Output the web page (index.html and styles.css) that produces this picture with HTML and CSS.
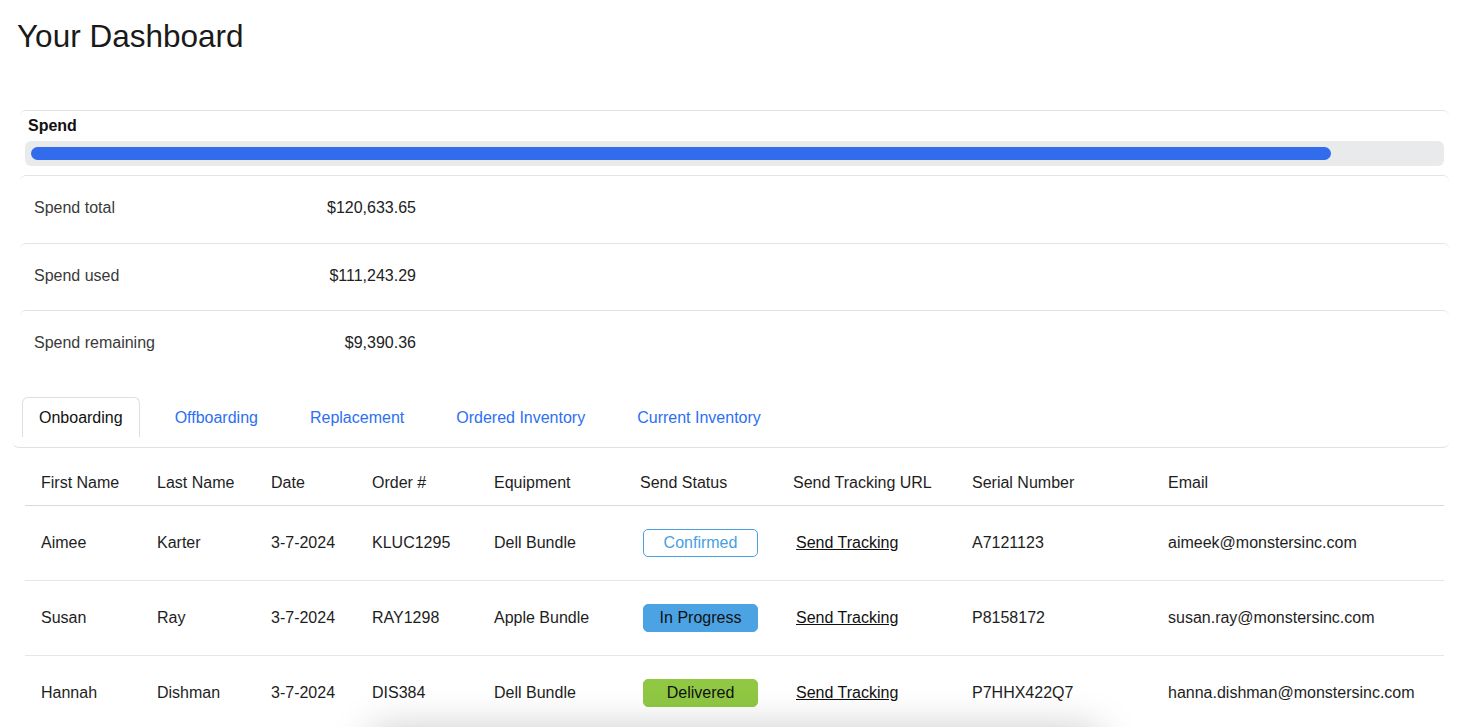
FILE: index.html
```html
<!DOCTYPE html>
<html lang="en">
<head>
    <meta charset="UTF-8">
    <meta name="viewport" content="width=device-width, initial-scale=1.0">
    <title>Your Dashboard</title>
    <link rel="stylesheet" href="styles.css">
</head>
<body>
    <div class="top-shadow"></div>
    <div class="page">
        <h1 class="page-title">Your Dashboard</h1>

        <div class="spend-card">
            <div class="spend-title">Spend</div>
            <div class="spend-track">
                <div class="spend-fill" style="width: 92.4%;"></div>
            </div>
        </div>
        <div class="spend-row">
            <span class="spend-label">Spend total</span>
            <span class="spend-value">$120,633.65</span>
        </div>
        <div class="spend-row">
            <span class="spend-label">Spend used</span>
            <span class="spend-value">$111,243.29</span>
        </div>
        <div class="spend-row">
            <span class="spend-label">Spend remaining</span>
            <span class="spend-value">$9,390.36</span>
        </div>

        <nav class="tabs">
            <a class="tab active">Onboarding</a>
            <a class="tab">Offboarding</a>
            <a class="tab">Replacement</a>
            <a class="tab">Ordered Inventory</a>
            <a class="tab">Current Inventory</a>
        </nav>

        <table class="orders">
            <colgroup>
                <col style="width: 116px">
                <col style="width: 114px">
                <col style="width: 101px">
                <col style="width: 122px">
                <col style="width: 146px">
                <col style="width: 153px">
                <col style="width: 179px">
                <col style="width: 196px">
                <col>
            </colgroup>
            <thead>
                <tr>
                    <th>First Name</th>
                    <th>Last Name</th>
                    <th>Date</th>
                    <th>Order #</th>
                    <th>Equipment</th>
                    <th>Send Status</th>
                    <th>Send Tracking URL</th>
                    <th>Serial Number</th>
                    <th>Email</th>
                </tr>
            </thead>
            <tbody>
                <tr>
                    <td>Aimee</td>
                    <td>Karter</td>
                    <td>3-7-2024</td>
                    <td>KLUC1295</td>
                    <td>Dell Bundle</td>
                    <td><span class="badge confirmed">Confirmed</span></td>
                    <td><a class="tracking">Send Tracking</a></td>
                    <td>A7121123</td>
                    <td>aimeek@monstersinc.com</td>
                </tr>
                <tr>
                    <td>Susan</td>
                    <td>Ray</td>
                    <td>3-7-2024</td>
                    <td>RAY1298</td>
                    <td>Apple Bundle</td>
                    <td><span class="badge progress">In Progress</span></td>
                    <td><a class="tracking">Send Tracking</a></td>
                    <td>P8158172</td>
                    <td>susan.ray@monstersinc.com</td>
                </tr>
                <tr>
                    <td>Hannah</td>
                    <td>Dishman</td>
                    <td>3-7-2024</td>
                    <td>DIS384</td>
                    <td>Dell Bundle</td>
                    <td><span class="badge delivered">Delivered</span></td>
                    <td><a class="tracking">Send Tracking</a></td>
                    <td>P7HHX422Q7</td>
                    <td>hanna.dishman@monstersinc.com</td>
                </tr>
            </tbody>
        </table>
    </div>
    <div class="floating-shadow"></div>
</body>
</html>
```

FILE: styles.css
```css
body {
    margin: 0;
    font-family: "Liberation Sans", Arial, Helvetica, sans-serif;
    color: #1d1d1f;
    background-color: #fff;
}

.top-shadow {
    position: fixed;
    top: 0;
    left: 0;
    right: 0;
    height: 0;
    box-shadow: 0 0 6px rgba(0, 0, 0, 0.12);
}

.page {
    padding: 0 14px 0 13px;
}

.page-title {
    margin: 18px 0 56px;
    padding-left: 4px;
    font-size: 31.5px;
    line-height: 36px;
    font-weight: 400;
    color: #1a1a1a;
}

.spend-card {
    margin-left: 7px;
    padding: 5px 5px 9px;
    border-top: 1px solid #e3e3e3;
    border-radius: 6px;
}

.spend-title {
    padding-left: 3px;
    font-size: 16px;
    font-weight: bold;
    line-height: 20px;
    color: #111;
}

.spend-track {
    margin-top: 5px;
    padding: 6px;
    background-color: #e9eaec;
    border-radius: 6px;
}

.spend-fill {
    height: 13px;
    background-color: #316ced;
    border-radius: 7px;
}

.spend-row {
    margin-left: 7px;
    display: grid;
    grid-template-columns: 190px 192px;
    padding: 20px 14px 23.5px;
    line-height: 23px;
    font-size: 16px;
    border-top: 1px solid #e3e3e3;
    border-radius: 6px;
}

.spend-label {
    color: #3a3a3a;
}

.spend-value {
    text-align: right;
    color: #222;
}

.tabs {
    display: flex;
    gap: 18px;
    margin-top: 19px;
    padding: 0 0 10px 9px;
    border-bottom: 1px solid #e1e1e1;
    border-radius: 6px;
}

.tab {
    padding: 10px 16px 9px;
    font-size: 16px;
    line-height: 20px;
    color: #2d6ff2;
    border: 1px solid transparent;
    border-bottom: none;
    border-radius: 6px 6px 0 0;
    cursor: pointer;
}

.tab.active {
    color: #111;
    border-color: #dedede;
}

.orders {
    width: calc(100% - 17px);
    margin: 11px 5px 0 12px;
    border-collapse: collapse;
    table-layout: fixed;
    font-size: 16px;
    line-height: 20px;
    color: #1e1e1e;
}

.orders th {
    padding: 14px 16px 12px;
    text-align: left;
    font-weight: 400;
    border-bottom: 1px solid #d9d9d9;
    white-space: nowrap;
}

.orders td {
    padding: 23px 16px;
    vertical-align: middle;
    border-bottom: 1px solid #e6e6e6;
    white-space: nowrap;
}

.badge {
    display: inline-block;
    box-sizing: border-box;
    width: 115px;
    height: 28px;
    margin-left: 3px;
    line-height: 26px;
    text-align: center;
    border: 1px solid transparent;
    border-radius: 5px;
}

.badge.confirmed {
    color: #48a0e3;
    border-color: #48a0e3;
}

.badge.progress {
    background-color: #4ba3e4;
    border-color: #4ba3e4;
    color: #111;
}

.badge.delivered {
    background-color: #90c843;
    border-color: #90c843;
    color: #111;
}

.tracking {
    margin-left: 3px;
    color: #111;
    text-decoration: underline;
    cursor: pointer;
}

.floating-shadow {
    position: fixed;
    left: 370px;
    bottom: -52px;
    width: 730px;
    height: 50px;
    background-color: #fff;
    border-radius: 12px;
    box-shadow: 0 0 40px rgba(0, 0, 0, 0.22);
}
```
